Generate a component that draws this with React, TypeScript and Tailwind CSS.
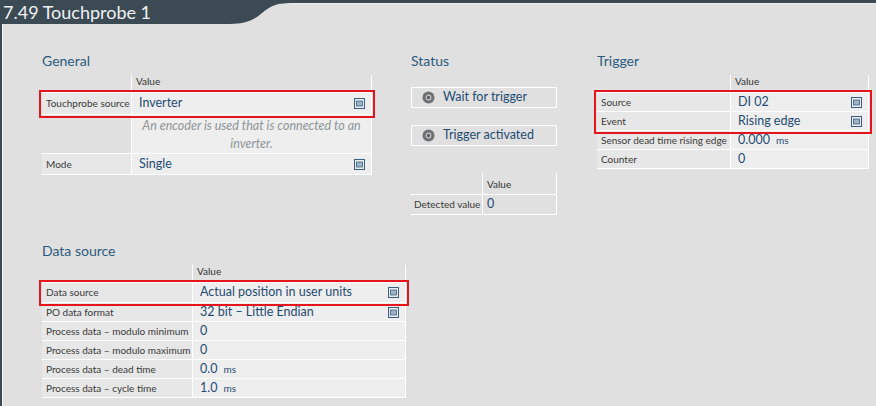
import React from 'react'

const font = { fontFamily: 'Lato, "Noto Sans", sans-serif' }

function ListIcon() {
  return (
    <svg width="11" height="11" viewBox="0 0 11 11" className="shrink-0">
      <rect x="0.5" y="0.5" width="10" height="10" fill="#f4f6f8" stroke="#3a5f80" strokeWidth="1.1" />
      <rect x="2.5" y="3" width="6" height="5" fill="#9fb3c6" stroke="#3a5f80" strokeWidth="0.8" />
    </svg>
  )
}

function StatusIcon() {
  return (
    <svg width="13" height="13" viewBox="0 0 13 13" className="shrink-0">
      <circle cx="6.5" cy="6.5" r="6" fill="#6f7173" />
      <circle cx="6.5" cy="6.5" r="2.3" fill="#5a5c5e" stroke="#c9cbcc" strokeWidth="1.2" />
    </svg>
  )
}

type Row = {
  label: string
  value?: string
  unit?: string
  list?: boolean
  h?: string
}

function Heading({ children }: { children: React.ReactNode }) {
  return <div className="text-[14px] leading-[18px] text-[#2d5a7e] mb-[5px]">{children}</div>
}

function ValueHeader({ labelW, valueW }: { labelW: string; valueW: string }) {
  return (
    <div className="flex h-[18px] border-b border-white">
      <div className={labelW} />
      <div className={`${valueW} border-l border-r border-white text-[10px] leading-[13px] text-[#333] pl-[4px]`}>Value</div>
    </div>
  )
}

function TableRow({ r, labelW, valueW }: { r: Row; labelW: string; valueW: string }) {
  return (
    <div className={`flex ${r.h ?? 'h-[19px]'} border-b border-white`}>
      <div className={`${labelW} bg-[#e6e7e6] text-[10px] text-[#3a3a3a] pl-[4px] flex items-center whitespace-nowrap overflow-hidden`}>
        {r.label}
      </div>
      <div className={`${valueW} bg-[#eeeeee] border-l border-r border-white flex items-center pl-[7px] pr-[6px]`}>
        <span className="text-[12.5px] text-[#1f4b73] whitespace-nowrap">{r.value}</span>
        {r.unit && <span className="text-[10px] text-[#1f4b73] ml-[6px]">{r.unit}</span>}
        {r.list && <span className="ml-auto flex"><ListIcon /></span>}
      </div>
    </div>
  )
}

export default function App() {
  const trigLabel = 'w-[133px]'
  const trigValue = 'w-[139px]'
  const dsLabel = 'w-[150px]'
  const dsValue = 'w-[214px]'
  return (
    <div className="w-[876px] h-[406px] bg-[#dfe0df] flex flex-col overflow-hidden" style={font}>
      {/* header tab */}
      <div className="flex h-[24px] shrink-0">
        <div className="w-[230px] bg-[#3c4a54] text-[18px] leading-[24px] text-[#eef1f3] pl-[3px] whitespace-nowrap">
          7.49 Touchprobe 1
        </div>
        <svg width="62" height="24" viewBox="0 0 62 24" className="shrink-0">
          <path d="M0 0 H62 V3 C44 3 40 7 32 13 C24 20 16 24 0 24 Z" fill="#3c4a54" />
        </svg>
        <div className="flex-1 border-t-[3px] border-[#3c4a54]">
          <div className="h-px bg-[#eceeed]" />
        </div>
      </div>

      <div className="flex-1 flex border-l-2 border-[#3c4a54]">
        <div className="flex-1 border-l border-[#f2f3f2] pl-[39px] pt-[28px]">
          {/* top row */}
          <div className="flex">
            {/* General */}
            <div className="w-[330px]">
              <Heading>General</Heading>
              <ValueHeader labelW="w-[89px]" valueW="w-[241px]" />
              <div className="outline-2 outline-[#e5161b] outline-offset-[1px]">
                <TableRow r={{ label: 'Touchprobe source', value: 'Inverter', list: true, h: 'h-[22px]' }} labelW="w-[89px]" valueW="w-[241px]" />
              </div>
              <div className="flex h-[39px] border-b border-white">
                <div className="w-[89px]" />
                <div className="w-[241px] bg-[#eeeeee] border-l border-r border-white text-[12.5px] italic text-[#8e9598] text-center leading-[18px] pt-[2px] px-[4px]">
                  An encoder is used that is connected to an inverter.
                </div>
              </div>
              <TableRow r={{ label: 'Mode', value: 'Single', list: true, h: 'h-[21px]' }} labelW="w-[89px]" valueW="w-[241px]" />
            </div>

            {/* Status */}
            <div className="w-[146px] ml-[39px]">
              <Heading>Status</Heading>
              <div className="mt-[17px] h-[21px] border border-white flex items-center pl-[10px] gap-[8px]">
                <StatusIcon />
                <span className="text-[12.5px] text-[#1f4b73]">Wait for trigger</span>
              </div>
              <div className="mt-[17px] h-[21px] border border-white flex items-center pl-[10px] gap-[8px]">
                <StatusIcon />
                <span className="text-[12.5px] text-[#1f4b73]">Trigger activated</span>
              </div>
              <div className="mt-[27px]">
                <div className="flex h-[22px] border-b border-white">
                  <div className="w-[71px]" />
                  <div className="w-[75px] border-l border-r border-white text-[10px] leading-[22px] text-[#333] pl-[4px]">Value</div>
                </div>
                <div className="flex h-[20px] border-b border-white">
                  <div className="w-[71px] text-[10px] text-[#3a3a3a] pl-[3px] flex items-center whitespace-nowrap">Detected value</div>
                  <div className="w-[75px] border-l border-r border-white text-[12.5px] text-[#1f4b73] pl-[4px] flex items-center">0</div>
                </div>
              </div>
            </div>

            {/* Trigger */}
            <div className="w-[272px] ml-[40px]">
              <Heading>Trigger</Heading>
              <ValueHeader labelW={trigLabel} valueW={trigValue} />
              <div className="outline-2 outline-[#e5161b] outline-offset-[1px]">
                <TableRow r={{ label: 'Source', value: 'DI 02', list: true }} labelW={trigLabel} valueW={trigValue} />
                <TableRow r={{ label: 'Event', value: 'Rising edge', list: true }} labelW={trigLabel} valueW={trigValue} />
              </div>
              <TableRow r={{ label: 'Sensor dead time rising edge', value: '0.000', unit: 'ms' }} labelW={trigLabel} valueW={trigValue} />
              <TableRow r={{ label: 'Counter', value: '0' }} labelW={trigLabel} valueW={trigValue} />
            </div>
          </div>

          {/* Data source */}
          <div className="w-[364px] mt-[27px]">
            <Heading>Data source</Heading>
            <ValueHeader labelW={dsLabel} valueW={dsValue} />
            <div className="outline-2 outline-[#e5161b] outline-offset-[1px]">
              <TableRow r={{ label: 'Data source', value: 'Actual position in user units', list: true, h: 'h-[20px]' }} labelW={dsLabel} valueW={dsValue} />
            </div>
            <TableRow r={{ label: 'PO data format', value: '32 bit – Little Endian', list: true }} labelW={dsLabel} valueW={dsValue} />
            <TableRow r={{ label: 'Process data – modulo minimum', value: '0' }} labelW={dsLabel} valueW={dsValue} />
            <TableRow r={{ label: 'Process data – modulo maximum', value: '0' }} labelW={dsLabel} valueW={dsValue} />
            <TableRow r={{ label: 'Process data – dead time', value: '0.0', unit: 'ms' }} labelW={dsLabel} valueW={dsValue} />
            <TableRow r={{ label: 'Process data – cycle time', value: '1.0', unit: 'ms' }} labelW={dsLabel} valueW={dsValue} />
          </div>
        </div>
      </div>
    </div>
  )
}
